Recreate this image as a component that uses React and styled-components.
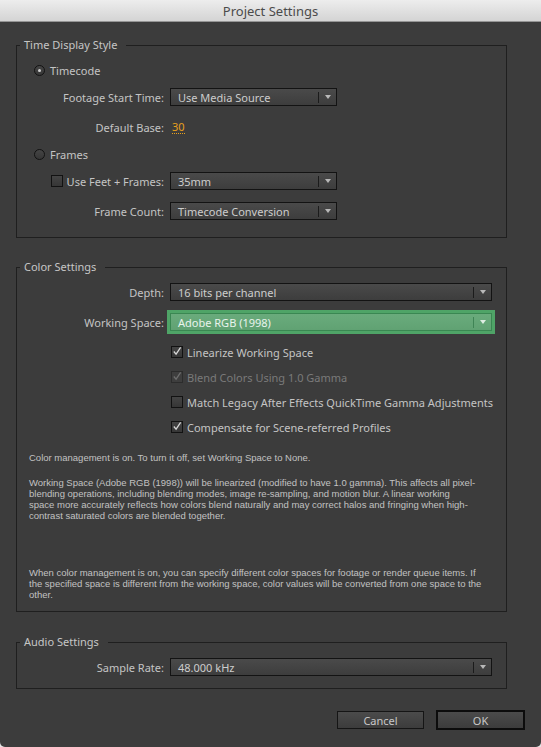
import styled, { createGlobalStyle, css } from "styled-components";

const GlobalStyle = createGlobalStyle`
    html, body {
        margin: 0;
        padding: 0;
        background: #e4e4e4;
    }
    body {
        font-family: "Noto Sans", "DejaVu Sans", sans-serif;
        -webkit-font-smoothing: antialiased;
    }
`;

const Window = styled.div`
    width: 541px;
    height: 747px;
    background: #3c3c3c;
    border-radius: 0 0 5px 5px;
    overflow: hidden;
    display: flex;
    flex-direction: column;
    color: #c4c4c4;
    font-size: 11px;
`;

const TitleBar = styled.div`
    height: 22px;
    box-sizing: border-box;
    border-bottom: 1px solid #959595;
    background: linear-gradient(#ededed, #d4d4d4);
    display: flex;
    align-items: center;
    justify-content: center;
    font-size: 13px;
    color: #4b4b4b;
`;

const Body = styled.div`
    padding: 16px 16px 0 16px;
    display: flex;
    flex-direction: column;
`;

const Group = styled.fieldset`
    margin: ${p => p.$mt || 0}px 18px 0 0;
    padding: 0 0 ${p => p.$pb}px 0;
    border: 1px solid #1f1f1f;
    min-width: 0;
`;

const Legend = styled.legend`
    margin-left: 3px;
    padding: 0 9px 0 4px;
    line-height: 14px;
    font-size: 11px;
    color: #c6c6c6;
`;

const Row = styled.div`
    display: flex;
    align-items: center;
    height: 18px;
    margin-top: ${p => p.$mt || 0}px;
    padding-left: ${p => p.$indent || 0}px;
`;

const Label = styled.label`
    width: 147px;
    margin-right: 6px;
    flex-shrink: 0;
    display: flex;
    align-items: center;
    justify-content: flex-end;
    white-space: nowrap;
`;

const Radio = styled.span`
    width: 11px;
    height: 11px;
    box-sizing: border-box;
    border-radius: 50%;
    border: 1px solid #121212;
    background: linear-gradient(#454545, #363636);
    margin: 0 5px 0 17px;
    display: flex;
    align-items: center;
    justify-content: center;
    &::after {
        content: "";
        width: 3px;
        height: 3px;
        border-radius: 50%;
        background: ${p => (p.$on ? "#d0d0d0" : "transparent")};
    }
`;

const Box = styled.span`
    width: 12px;
    height: 12px;
    box-sizing: border-box;
    border: 1px solid ${p => (p.$disabled ? "#2c2c2c" : "#121212")};
    background: ${p => (p.$disabled ? "#3e3e3e" : "linear-gradient(#444, #363636)")};
    margin-right: 4px;
    flex-shrink: 0;
    display: flex;
    align-items: center;
    justify-content: center;
    svg {
        display: block;
        margin-top: -2px;
    }
`;

const CheckText = styled.span`
    color: ${p => (p.$disabled ? "#7a7a7a" : "#c4c4c4")};
    white-space: nowrap;
`;

const Select = styled.div`
    width: ${p => p.$w}px;
    height: 18px;
    box-sizing: border-box;
    border: 1px solid #131313;
    background: linear-gradient(#4a4a4a, #3d3d3d);
    display: flex;
    align-items: center;
    padding-left: 7px;
    color: #cdcdcd;
    white-space: nowrap;
    ${p =>
        p.$focus &&
        css`
            border-color: #3a8752;
            background: linear-gradient(#6aab7c, #60a273);
            box-shadow: 0 0 0 3px #4fa467;
            color: #e9f3ec;
        `}
`;

const SelectValue = styled.span`
    flex: 1;
`;

const ArrowBox = styled.span`
    width: 17px;
    height: 11px;
    border-left: 1px solid ${p => (p.$focus ? "#3f8455" : "#1b1b1b")};
    display: flex;
    align-items: center;
    justify-content: center;
    &::after {
        content: "";
        border-left: 3.5px solid transparent;
        border-right: 3.5px solid transparent;
        border-top: 4px solid ${p => (p.$focus ? "#dfeee3" : "#b9b9b9")};
    }
`;

const Value = styled.span`
    color: #e8a01c;
    border-bottom: 1px dotted #e8a01c;
    line-height: 12px;
    margin-left: 2px;
`;

const Note = styled.p`
    margin: ${p => p.$mt}px 17px 0 12px;
    font-family: "Liberation Sans", Arial, sans-serif;
    font-size: 9.5px;
    line-height: 11px;
    color: #c2c2c2;
    white-space: nowrap;
`;

const Footer = styled.div`
    display: flex;
    justify-content: flex-end;
    align-items: center;
    gap: 12px;
    margin-top: 21px;
`;

const Button = styled.button`
    width: ${p => (p.$primary ? 89 : 87)}px;
    height: ${p => (p.$primary ? 20 : 18)}px;
    box-sizing: border-box;
    border: ${p => (p.$primary ? "2px solid #0c0c0c" : "1px solid #151515")};
    background: linear-gradient(#4b4b4b, #3c3c3c);
    color: #c8c8c8;
    font-family: inherit;
    font-size: 11px;
    padding: 0;
`;

function Dropdown({ w, value, focus }) {
    return (
        <Select $w={w} $focus={focus}>
            <SelectValue>{value}</SelectValue>
            <ArrowBox $focus={focus} />
        </Select>
    );
}

function Check({ checked, disabled, children }) {
    return (
        <>
            <Box $disabled={disabled}>
                {checked && (
                    <svg width="11" height="11" viewBox="0 0 11 11">
                        <path
                            d="M2 5.5 L4.5 8.5 L9.5 1"
                            fill="none"
                            stroke={disabled ? "#6e6e6e" : "#d6d6d6"}
                            strokeWidth="1.4"
                        />
                    </svg>
                )}
            </Box>
            <CheckText $disabled={disabled}>{children}</CheckText>
        </>
    );
}

export default function App() {
    return (
        <>
            <GlobalStyle />
            <Window>
                <TitleBar>Project Settings</TitleBar>
                <Body>
                    <Group $pb={17}>
                        <Legend>Time Display Style</Legend>
                        <Row $mt={9}>
                            <Radio $on />
                            Timecode
                        </Row>
                        <Row $mt={9}>
                            <Label>Footage Start Time:</Label>
                            <Dropdown w={167} value="Use Media Source" />
                        </Row>
                        <Row $mt={12}>
                            <Label>Default Base:</Label>
                            <Value>30</Value>
                        </Row>
                        <Row $mt={9}>
                            <Radio />
                            Frames
                        </Row>
                        <Row $mt={9}>
                            <Label>
                                <Check>Use Feet + Frames:</Check>
                            </Label>
                            <Dropdown w={167} value="35mm" />
                        </Row>
                        <Row $mt={12}>
                            <Label>Frame Count:</Label>
                            <Dropdown w={167} value="Timecode Conversion" />
                        </Row>
                    </Group>

                    <Group $mt={22} $pb={11}>
                        <Legend>Color Settings</Legend>
                        <Row $mt={9}>
                            <Label>Depth:</Label>
                            <Dropdown w={322} value="16 bits per channel" />
                        </Row>
                        <Row $mt={12}>
                            <Label>Working Space:</Label>
                            <Dropdown w={322} value="Adobe RGB (1998)" focus />
                        </Row>
                        <Row $mt={12} $indent={154}>
                            <Check checked>Linearize Working Space</Check>
                        </Row>
                        <Row $mt={7} $indent={154}>
                            <Check checked disabled>
                                Blend Colors Using 1.0 Gamma
                            </Check>
                        </Row>
                        <Row $mt={7} $indent={154}>
                            <Check>Match Legacy After Effects QuickTime Gamma Adjustments</Check>
                        </Row>
                        <Row $mt={7} $indent={154}>
                            <Check checked>Compensate for Scene-referred Profiles</Check>
                        </Row>
                        <Note $mt={16}>Color management is on. To turn it off, set Working Space to None.</Note>
                        <Note $mt={14}>
                            Working Space (Adobe RGB (1998)) will be linearized (modified to have 1.0 gamma). This affects all pixel-
                            <br />
                            blending operations, including blending modes, image re-sampling, and motion blur. A linear working
                            <br />
                            space more accurately reflects how colors blend naturally and may correct halos and fringing when high-
                            <br />
                            contrast saturated colors are blended together.
                        </Note>
                        <Note $mt={46}>
                            When color management is on, you can specify different color spaces for footage or render queue items. If
                            <br />
                            the specified space is different from the working space, color values will be converted from one space to the
                            <br />
                            other.
                        </Note>
                    </Group>

                    <Group $mt={23} $pb={12}>
                        <Legend>Audio Settings</Legend>
                        <Row $mt={9}>
                            <Label>Sample Rate:</Label>
                            <Dropdown w={322} value="48.000 kHz" />
                        </Row>
                    </Group>

                    <Footer>
                        <Button>Cancel</Button>
                        <Button $primary>OK</Button>
                    </Footer>
                </Body>
            </Window>
        </>
    );
}
